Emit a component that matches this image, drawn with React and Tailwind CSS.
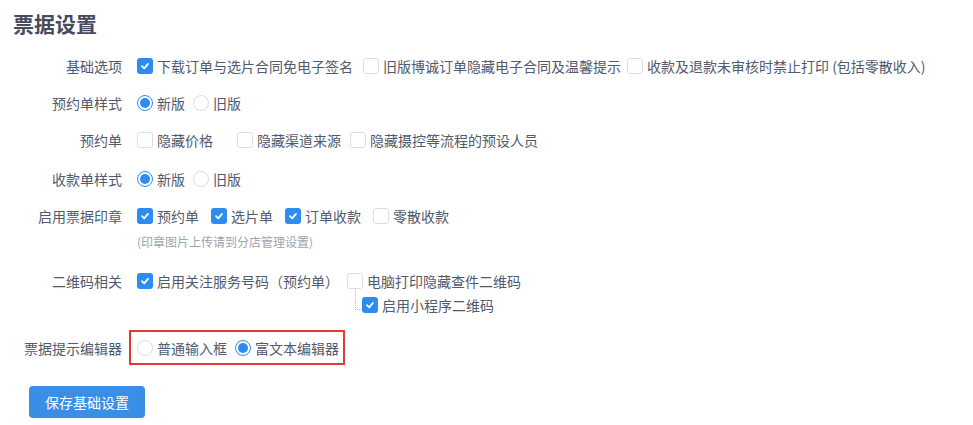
import React from "react";

const font = { fontFamily: '"Noto Sans CJK SC", "Noto Sans", sans-serif' };

function Check({ checked }) {
  return checked ? (
    <span className="flex h-[16px] w-[16px] shrink-0 items-center justify-center rounded-[3px] bg-[#2d8cf0]">
      <svg width="10" height="10" viewBox="0 0 10 10">
        <path d="M2 5.2 L4.2 7.3 L8 2.9" fill="none" stroke="white" strokeWidth="1.8" strokeLinecap="round" strokeLinejoin="round" />
      </svg>
    </span>
  ) : (
    <span className="block h-[16px] w-[16px] shrink-0 rounded-[3px] border border-[#dcdee2] bg-white" />
  );
}

function Radio({ checked }) {
  return checked ? (
    <span className="flex h-[16px] w-[16px] shrink-0 items-center justify-center rounded-full border border-[#2d8cf0] bg-white">
      <span className="block h-[10px] w-[10px] rounded-full bg-[#2d8cf0]" />
    </span>
  ) : (
    <span className="block h-[16px] w-[16px] shrink-0 rounded-full border border-[#dcdee2] bg-white" />
  );
}

function CItem({ checked, children, className = "" }) {
  return (
    <span className={"flex items-center " + className}>
      <Check checked={checked} />
      <span className="ml-[4px] whitespace-nowrap">{children}</span>
    </span>
  );
}

function RItem({ checked, children, className = "" }) {
  return (
    <span className={"flex items-center " + className}>
      <Radio checked={checked} />
      <span className="ml-[4px] whitespace-nowrap">{children}</span>
    </span>
  );
}

function Row({ label, children, className = "" }) {
  return (
    <div className={"flex h-[20px] items-center " + className}>
      <div className="w-[122px] shrink-0 text-right text-[#515a6e]">{label}</div>
      <div className="ml-[15px] flex items-center">{children}</div>
    </div>
  );
}

export default function App() {
  return (
    <div className="h-[425px] w-[973px] overflow-hidden bg-white pt-[12px] text-[14px] leading-[20px] text-[#515a6e]" style={font}>
      <h1 className="pl-[13px] text-[21px] font-bold leading-[23px] text-[#464c5b]">票据设置</h1>

      <Row label="基础选项" className="mt-[21px]">
        <CItem checked className="mr-[10px]">下载订单与选片合同免电子签名</CItem>
        <CItem className="mr-[6px]">旧版博诚订单隐藏电子合同及温馨提示</CItem>
        <CItem>收款及退款未审核时禁止打印 (包括零散收入)</CItem>
      </Row>

      <Row label="预约单样式" className="mt-[17px]">
        <RItem checked className="mr-[8px]">新版</RItem>
        <RItem>旧版</RItem>
      </Row>

      <Row label="预约单" className="mt-[17px]">
        <CItem className="mr-[24px]">隐藏价格</CItem>
        <CItem className="mr-[9px]">隐藏渠道来源</CItem>
        <CItem>隐藏摄控等流程的预设人员</CItem>
      </Row>

      <Row label="收款单样式" className="mt-[19px]">
        <RItem checked className="mr-[8px]">新版</RItem>
        <RItem>旧版</RItem>
      </Row>

      <Row label="启用票据印章" className="mt-[17px]">
        <CItem checked className="mr-[12px]">预约单</CItem>
        <CItem checked className="mr-[12px]">选片单</CItem>
        <CItem checked className="mr-[12px]">订单收款</CItem>
        <CItem>零散收款</CItem>
      </Row>
      <div className="mt-[8px] pl-[137px] text-[12px] leading-[16px] text-[#a0a4ab]">(印章图片上传请到分店管理设置)</div>

      <div className="mt-[21px] flex items-start">
        <div className="flex h-[20px] w-[122px] shrink-0 items-center justify-end">二维码相关</div>
        <div className="ml-[15px] flex items-start">
          <CItem checked className="mr-[8px] h-[20px]">启用关注服务号码（预约单）</CItem>
          <div className="flex flex-col">
            <CItem className="h-[20px]">电脑打印隐藏查件二维码</CItem>
            <div className="relative mt-[4px] flex h-[20px] items-center pl-[15px]">
              <span className="absolute left-[8px] top-[-6px] h-[21px] w-[7px] border-b border-l border-dotted border-[#b9bcc2]" />
              <CItem checked>启用小程序二维码</CItem>
            </div>
          </div>
        </div>
      </div>

      <div className="mt-[15px] flex items-center">
        <div className="w-[122px] shrink-0 text-right">票据提示编辑器</div>
        <div className="ml-[7px] flex h-[35px] w-[216px] items-center border-2 border-[#e53935] pl-[6px]">
          <RItem className="mr-[8px]">普通输入框</RItem>
          <RItem checked>富文本编辑器</RItem>
        </div>
      </div>

      <button className="ml-[29px] mt-[21px] flex h-[32px] w-[116px] items-center justify-center rounded-[4px] bg-[#3a8ee6] text-[14px] text-white">
        保存基础设置
      </button>
    </div>
  );
}
